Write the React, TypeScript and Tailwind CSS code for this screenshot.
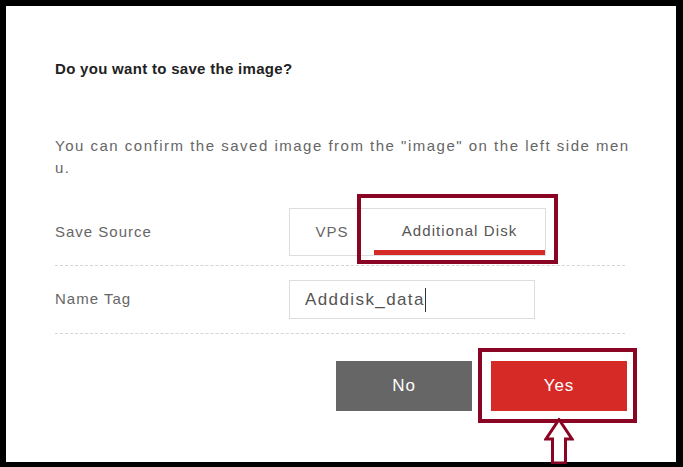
import React from 'react';

const font = { fontFamily: '"Liberation Sans", Arial, sans-serif' };

export default function App() {
  return (
    <div
      className="relative w-[683px] h-[467px] bg-black border-t-[6px] border-l-[6px] border-r-[7px] border-b-[5px] border-black"
      style={font}
    >
      <div className="h-full bg-white pl-[49px] pr-[51px] pt-[53px]">
        {/* Title */}
        <h2 className="text-[15px] leading-[20px] font-bold tracking-[0.3px] text-[#222]">
          Do you want to save the image?
        </h2>

        {/* Description */}
        <p className="mt-[56px] text-[15px] leading-[22px] tracking-[1.5px] text-[#666] whitespace-nowrap">
          You can confirm the saved image from the "image" on the left side men
          <br />
          u.
        </p>

        {/* Save Source */}
        <div className="mt-[29px] flex items-center pb-[9px] border-b border-dashed border-[#d6d6d6]">
          <div className="w-[234px] shrink-0 text-[15px] tracking-[1px] text-[#666]">Save Source</div>
          <div className="flex h-[48px] border border-[#dddddd]">
            <button className="w-[84px] text-[15px] tracking-[1px] text-[#666]">VPS</button>
            <div className="relative w-[171px]">
              <button className="w-full h-full text-[15px] tracking-[1.1px] text-[#555] border-b-[5px] border-[#d62a27] pt-[4px]">
                Additional Disk
              </button>
              <div className="absolute -left-[17px] -top-[15px] -right-[13px] -bottom-[9px] border-[4px] border-[#8a0523]" />
            </div>
          </div>
        </div>

        {/* Name Tag */}
        <div className="pt-[14px] pb-[14px] flex items-center border-b border-dashed border-[#d6d6d6]">
          <div className="w-[234px] shrink-0 text-[15px] tracking-[1px] text-[#666]">Name Tag</div>
          <div className="w-[246px] h-[39px] border border-[#dddddd] flex items-center pl-[15px]">
            <span className="text-[17px] tracking-[1.4px] text-[#555]">Adddisk_data</span>
            <span className="w-px h-[24px] bg-[#333]" />
          </div>
        </div>

        {/* Buttons */}
        <div className="mt-[27px] flex gap-[19px] pl-[281px] -mr-[4px]">
          <button className="w-[136px] h-[50px] shrink-0 bg-[#666666] text-white text-[17px] font-normal tracking-[1px]">
            No
          </button>
          <div className="relative shrink-0">
            <button className="w-[136px] h-[50px] bg-[#d62a27] text-white text-[17px] font-normal tracking-[1px]">
              Yes
            </button>
            <div className="absolute -left-[13px] -top-[13px] -right-[10px] -bottom-[12px] border-[4px] border-[#8a0523]" />
          </div>
        </div>
      </div>

      {/* Arrow pointing at Yes */}
      <svg
        className="absolute left-[538px] top-[412px]"
        width="30"
        height="46"
        viewBox="0 0 30 46"
      >
        <path
          d="M15 1.5 L28 21 L21.5 21 L21.5 45 L8.5 45 L8.5 21 L2 21 Z"
          fill="white"
          stroke="#8a0523"
          strokeWidth="3"
          strokeLinejoin="miter"
        />
      </svg>
    </div>
  );
}
